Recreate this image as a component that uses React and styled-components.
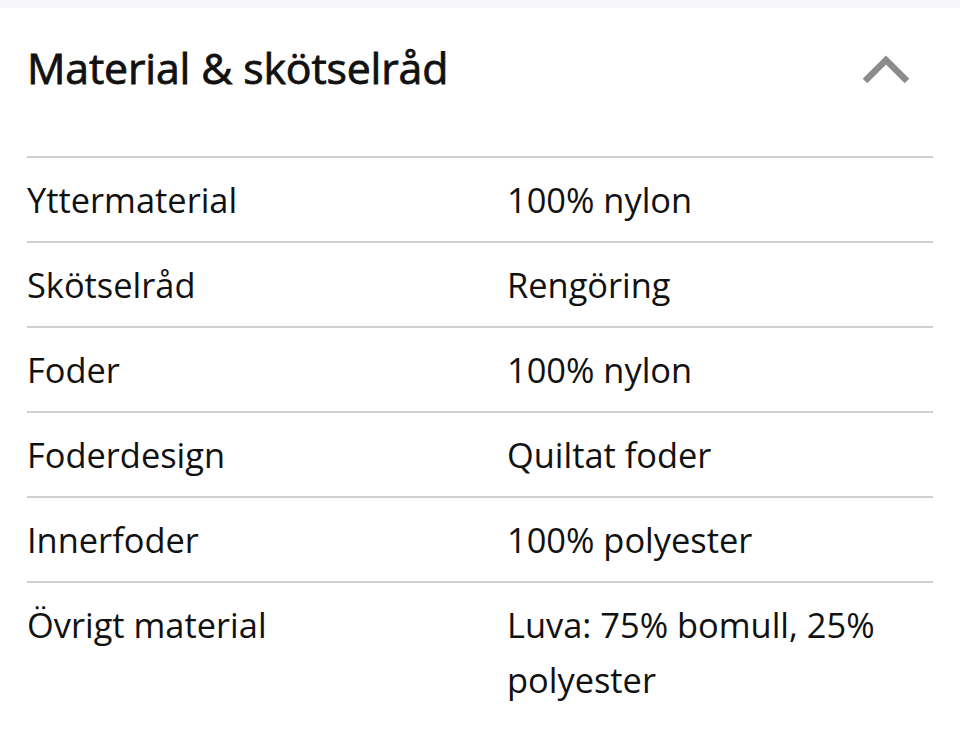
import React from "react";
import styled, { createGlobalStyle } from "styled-components";

const GlobalStyle = createGlobalStyle`
  html, body { margin: 0; padding: 0; background: #ffffff; }
  body { font-family: "Open Sans", "Noto Sans", sans-serif; color: #111111; }
`;

const TopStrip = styled.div`
  height: 8px;
  background: #f6f6fa;
`;

const Section = styled.section`
  padding: 0 27px;
`;

const Header = styled.div`
  display: flex;
  align-items: center;
  justify-content: space-between;
  height: 120px;
  margin-bottom: 28px;
`;

const Title = styled.h2`
  margin: -2px 0 0 0;
  font-size: 42.8px;
  font-weight: 400;
  color: #111111;
  -webkit-text-stroke: 0.8px #111111;
  letter-spacing: -0.15px;
`;

const Toggle = styled.button`
  border: none;
  background: none;
  padding: 0;
  margin-right: 22px;
  width: 50px;
  height: 34px;
  display: flex;
  align-items: center;
  justify-content: center;
  cursor: pointer;
`;

const Table = styled.div`
  display: flex;
  flex-direction: column;
`;

const Row = styled.div`
  display: grid;
  grid-template-columns: 480px 1fr;
  border-top: 2px solid #cfcfcf;
  padding: 14px 0 14px;
  font-size: 34.4px;
  line-height: 55px;
  color: #111111;
`;

const Label = styled.div`
  padding-left: 0;
`;

const Value = styled.div`
  padding-right: 40px;
`;

const rows = [
  ["Yttermaterial", "100% nylon"],
  ["Skötselråd", "Rengöring"],
  ["Foder", "100% nylon"],
  ["Foderdesign", "Quiltat foder"],
  ["Innerfoder", "100% polyester"],
  ["Övrigt material", "Luva: 75% bomull, 25% polyester"],
];

export default function App() {
  return (
    <>
      <GlobalStyle />
      <TopStrip />
      <Section>
        <Header>
          <Title>Material &amp; skötselråd</Title>
          <Toggle aria-label="Dölj">
            <svg width="50" height="34" viewBox="0 0 50 34">
              <polyline
                points="4,30 25,9 46,30"
                fill="none"
                stroke="#8c8c8c"
                strokeWidth="6.5"
                strokeLinejoin="miter"
              />
            </svg>
          </Toggle>
        </Header>
        <Table>
          {rows.map(([k, v]) => (
            <Row key={k}>
              <Label>{k}</Label>
              <Value>{v}</Value>
            </Row>
          ))}
        </Table>
      </Section>
    </>
  );
}
